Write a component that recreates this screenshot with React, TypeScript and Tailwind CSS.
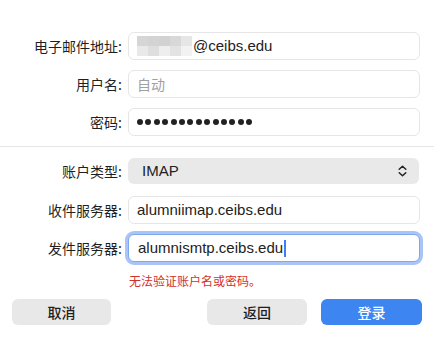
import React from "react";

const cjk = { fontFamily: '"Noto Sans CJK SC", "Noto Sans", sans-serif' };
const latin = { fontFamily: '"Liberation Sans", "Noto Sans CJK SC", sans-serif' };

function Label({ children }: { children: React.ReactNode }) {
  return (
    <div
      className="w-[123px] shrink-0 text-right text-[14px] leading-none text-[#1f1f1f] pr-[1px]"
      style={cjk}
    >
      {children}:
    </div>
  );
}

function Row({ label, children }: { label: string; children: React.ReactNode }) {
  return (
    <div className="flex items-center gap-[5px]">
      <Label>{label}</Label>
      {children}
    </div>
  );
}

function Box({ children, focused = false }: { children: React.ReactNode; focused?: boolean }) {
  return (
    <div
      className={
        focused
          ? "w-[292px] h-[28px] rounded-[6px] border border-[#7fa7ee] bg-white flex items-center pl-[9px] shadow-[0_0_0_3px_#a9c4f5]"
          : "w-[292px] h-[28px] rounded-[6px] border border-[#e6e6e6] bg-white flex items-center pl-[8px]"
      }
    >
      {children}
    </div>
  );
}

function Blur() {
  const top = ["#d6d6d6", "#d3d3d3", "#d2d2d2", "#d8d8d8", "#e6e6e6"];
  const bottom = ["#e9e9e9", "#dedede", "#eeeeee", "#e3e3e3", "#f2f2f2"];
  return (
    <div className="flex flex-col mr-[1px]">
      <div className="flex">
        {top.map((c, i) => (
          <div key={i} className="w-[11px] h-[10px]" style={{ background: c }} />
        ))}
      </div>
      <div className="flex">
        {bottom.map((c, i) => (
          <div key={i} className="w-[11px] h-[10px]" style={{ background: c }} />
        ))}
      </div>
    </div>
  );
}

export default function App() {
  return (
    <div className="w-[434px] h-[340px] bg-white relative overflow-hidden">
      <div className="pt-[32px]">
        <div className="flex flex-col gap-[10px]">
          <Row label="电子邮件地址">
            <Box>
              <Blur />
              <span className="text-[15px] text-[#222]" style={latin}>@ceibs.edu</span>
            </Box>
          </Row>
          <Row label="用户名">
            <Box>
              <span className="text-[14px] text-[#a0a0a0]" style={cjk}>自动</span>
            </Box>
          </Row>
          <Row label="密码">
            <Box>
              <div className="flex gap-[2.4px]">
                {Array.from({ length: 14 }).map((_, i) => (
                  <div key={i} className="w-[6px] h-[6px] rounded-full bg-[#222]" />
                ))}
              </div>
            </Box>
          </Row>
        </div>

        <div className="mt-[10px] h-px bg-[#e4e4e4]" />

        <div className="mt-[11px] flex flex-col">
          <Row label="账户类型">
            <div className="w-[291px] h-[26px] rounded-[6px] bg-[#e9e9e9] flex items-center justify-between pl-[14px] pr-[12px]">
              <span className="text-[15px] text-[#222]" style={latin}>IMAP</span>
              <svg width="9" height="12" viewBox="0 0 9 12" fill="none">
                <path d="M1.2 4.2 L4.5 1.2 L7.8 4.2" stroke="#222" strokeWidth="1.5" strokeLinecap="round" strokeLinejoin="round" />
                <path d="M1.2 7.8 L4.5 10.8 L7.8 7.8" stroke="#222" strokeWidth="1.5" strokeLinecap="round" strokeLinejoin="round" />
              </svg>
            </div>
          </Row>
          <div className="mt-[12px]">
            <Row label="收件服务器">
              <Box>
                <span className="text-[15px] text-[#222]" style={latin}>alumniimap.ceibs.edu</span>
              </Box>
            </Row>
          </div>
          <div className="mt-[10px]">
            <Row label="发件服务器">
              <Box focused>
                <span className="text-[15px] text-[#222]" style={latin}>alumnismtp.ceibs.edu</span>
                <span className="w-[2px] h-[17px] bg-[#3d7ff0] ml-[1px]" />
              </Box>
            </Row>
          </div>
        </div>

        <div className="mt-[11px] pl-[129px] text-[12px] leading-[16px] text-[#d2302a]" style={cjk}>
          无法验证账户名或密码。
        </div>

        <div className="mt-[10px] flex items-center px-[12px]">
          <button className="w-[99px] h-[26px] rounded-[6px] bg-[#e8e8e8] text-[14px] font-medium text-[#1e1e1e]" style={cjk}>
            取消
          </button>
          <div className="flex-1" />
          <button className="w-[100px] h-[26px] rounded-[6px] bg-[#e8e8e8] text-[14px] font-medium text-[#1e1e1e]" style={cjk}>
            返回
          </button>
          <button className="ml-[14px] w-[101px] h-[26px] rounded-[6px] bg-[#3d85f1] text-[14px] font-medium text-white" style={cjk}>
            登录
          </button>
        </div>
      </div>
    </div>
  );
}
